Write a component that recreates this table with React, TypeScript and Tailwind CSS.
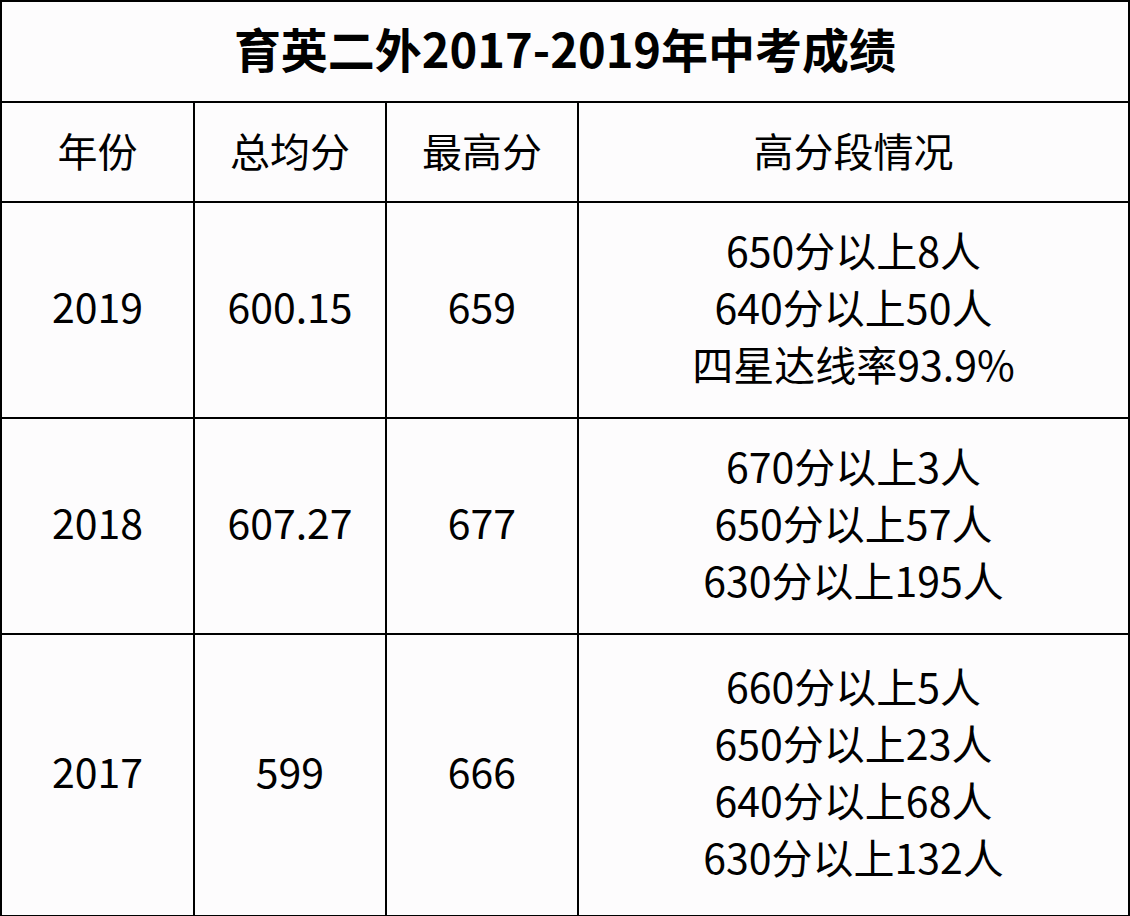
const rows = [
  { year: '2019', avg: '600.15', max: '659', lines: ['650分以上8人', '640分以上50人', '四星达线率93.9%'], h: 'h-[216px]' },
  { year: '2018', avg: '607.27', max: '677', lines: ['670分以上3人', '650分以上57人', '630分以上195人'], h: 'h-[216px]' },
  { year: '2017', avg: '599', max: '666', lines: ['660分以上5人', '650分以上23人', '640分以上68人', '630分以上132人'], h: 'h-[282px]' },
];

const cell = 'border-2 border-black text-center align-middle';

export default function App() {
  return (
    <div
      className="w-[1130px] h-[916px] bg-[#fdfcfd] text-black"
      style={{ fontFamily: '"Noto Sans CJK SC", "Noto Sans", sans-serif' }}
    >
      <table className="w-full h-full border-collapse table-fixed">
        <colgroup>
          <col className="w-[193px]" />
          <col className="w-[192px]" />
          <col className="w-[192px]" />
          <col />
        </colgroup>
        <tbody>
          <tr className="h-[101px]">
            <td colSpan={4} className={`${cell} text-[47px] font-bold leading-none pb-2`}>
              育英二外2017-2019年中考成绩
            </td>
          </tr>
          <tr className="h-[100px] text-[40px] leading-none">
            <td className={`${cell} pb-1`}>年份</td>
            <td className={`${cell} pb-1`}>总均分</td>
            <td className={`${cell} pb-1`}>最高分</td>
            <td className={`${cell} pb-1`}>高分段情况</td>
          </tr>
          {rows.map((r) => (
            <tr key={r.year} className={`${r.h} text-[41px]`}>
              <td className={`${cell} pb-2`}>{r.year}</td>
              <td className={`${cell} pb-2`}>{r.avg}</td>
              <td className={`${cell} pb-2`}>{r.max}</td>
              <td className={`${cell} leading-[57px] pb-2`}>
                {r.lines.map((l) => (
                  <div key={l}>{l}</div>
                ))}
              </td>
            </tr>
          ))}
        </tbody>
      </table>
    </div>
  );
}
